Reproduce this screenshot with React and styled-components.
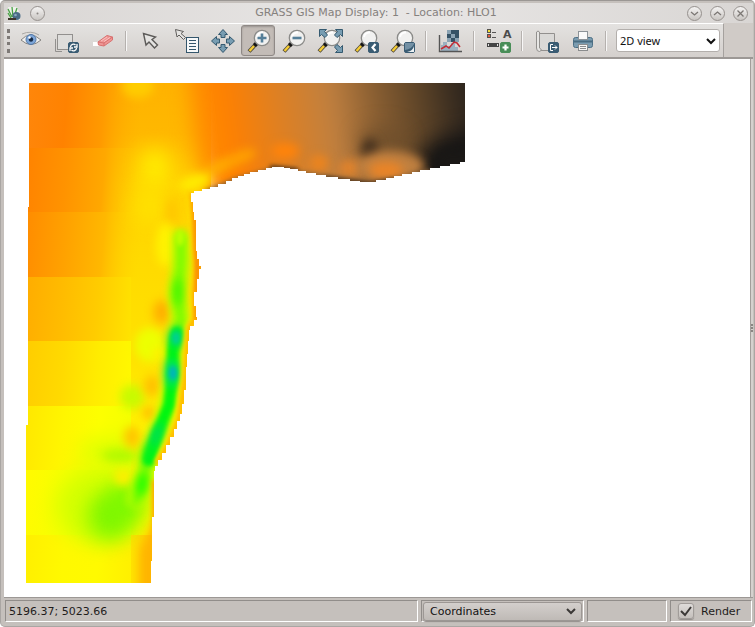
import React, { useState } from "react";
import styled, { createGlobalStyle } from "styled-components";

const GlobalStyle = createGlobalStyle`
  * {
    box-sizing: border-box;
  }
  body {
    margin: 0;
    background: #ffffff;
    font-family: "DejaVu Sans", sans-serif;
    font-size: 11px;
    color: #1f1c1b;
  }
  button,
  select,
  input {
    font: inherit;
    color: inherit;
    margin: 0;
    padding: 0;
  }
`;

const Window = styled.div`
  display: flex;
  flex-direction: column;
  min-height: 100vh;
  padding: 2px 1px 1px 3px;
  background: #c5c0bc;
  border: 1px solid #aaa6a3;
  border-top-color: #9b9794;
  border-radius: 5px;
`;

const TitleBar = styled.header`
  display: flex;
  align-items: center;
  height: 20px;
  padding: 0 5px 0 3px;
  gap: 8px;
  background: linear-gradient(90deg, #d9d6d4, #e9e7e6 50%, #d9d6d4);
`;

const Title = styled.h1`
  flex: 1;
  margin: 0;
  padding-left: 20px;
  text-align: center;
  white-space: pre;
  font-size: 11px;
  line-height: 20px;
  font-weight: normal;
  color: #85817e;
`;

const WindowButton = styled.button`
  display: flex;
  align-items: center;
  justify-content: center;
  width: 15px;
  height: 15px;
  border: 1px solid #96918e;
  border-radius: 50%;
  background: linear-gradient(#f4f3f2, #c9c5c2);
`;

const ToolRow = styled.div`
  display: flex;
  height: 36px;
  background: #d0cbc7;
  border-bottom: 2px solid #9c9895;
`;

const ToolBar = styled.div`
  display: flex;
  align-items: center;
  width: 720px;
  padding-right: 3px;
  background: linear-gradient(#e4e2e0, #d4d0cd);
  border-top: 1px solid #ffffff;
  border-right: 1px solid #a5a19e;
`;

const Grip = styled.div`
  width: 8px;
  height: 24px;
  border-left: 3px dotted #7e7a77;
  margin-left: 3px;
  margin-right: -3px;
`;

const ToolButton = styled.button`
  display: flex;
  align-items: center;
  justify-content: center;
  flex: none;
  width: 34px;
  height: 31px;
  margin: 0 1px;
  border: 1px solid ${(props) => (props.$active ? "#8f8986" : "transparent")};
  border-radius: 3px;
  background: ${(props) => (props.$active ? "#c3bcb7" : "transparent")};
  box-shadow: ${(props) => (props.$active ? "inset 0 1px 2px #9a9490" : "none")};

  svg {
    flex: none;
    overflow: visible;
  }
`;

const Separator = styled.div`
  flex: none;
  width: 2px;
  height: 20px;
  margin: 0 5px;
  background: linear-gradient(90deg, #b5b1ae 50%, #f8f7f7 50%);
`;

const SelectBox = styled.div`
  position: relative;
  width: ${(props) => props.$width};
  margin-left: ${(props) => (props.$flat ? "0" : "auto")};

  select {
    appearance: none;
    display: block;
    width: 100%;
    height: ${(props) => (props.$flat ? "19px" : "23px")};
    padding: 0 20px 0 ${(props) => (props.$flat ? "6px" : "3px")};
    border: 1px solid ${(props) => (props.$flat ? "#9c9794" : "#b3afac")};
    border-radius: 3px;
    background: ${(props) =>
      props.$flat ? "linear-gradient(#d3cfcc, #bfbab6)" : "#ffffff"};
    box-shadow: ${(props) => (props.$flat ? "0 1px 1px #8e8986" : "none")};
    font-family: ${(props) => (props.$flat ? "inherit" : '"Noto Sans", sans-serif')};
    font-size: 11px;
    color: #111111;
  }
  svg {
    position: absolute;
    right: ${(props) => (props.$flat ? "6px" : "4px")};
    top: 50%;
    margin-top: -4px;
    pointer-events: none;
  }
`;

const MapRow = styled.main`
  display: flex;
  flex: 1;
`;

const MapCanvas = styled.div`
  flex: 1;
  padding: 24px 22px 14px;
  background: #ffffff;

  svg {
    display: block;
  }
`;

const Sash = styled.div`
  display: flex;
  align-items: center;
  width: 3px;
  border-left: 1px solid #a29e9b;
  background: #d5d1ce;

  &::after {
    content: "";
    height: 8px;
    border-left: 2px dotted #8a8683;
  }
`;

const StatusBar = styled.footer`
  display: grid;
  grid-template-columns: 1fr 163px 80px 82px;
  gap: 3px;
  height: 28px;
  padding: 2px 1px 3px 1px;
  border-top: 1px solid #9c9895;
`;

const Field = styled.div`
  display: flex;
  align-items: center;
  padding: 0 ${(props) => (props.$tight ? "1px" : "3px")};
  border: 1px solid;
  border-color: #918d8a #ffffff #ffffff #918d8a;
`;

const RenderLabel = styled.label`
  display: flex;
  align-items: center;
  gap: 7px;
  padding-left: 4px;
`;

const TickBox = styled.span`
  display: grid;
  width: 16px;
  height: 16px;

  input,
  svg {
    grid-area: 1 / 1;
  }
  input {
    appearance: none;
    width: 16px;
    height: 16px;
    border: 1px solid #a19c99;
    border-radius: 3px;
    background: linear-gradient(#dedbd9, #c5c0bc);
    box-shadow: 0 1px 1px #918c89;
  }
  svg {
    pointer-events: none;
    visibility: hidden;
  }
  input:checked + svg {
    visibility: visible;
  }
`;

const Icon = ({ children }) => (
  <svg width="24" height="24" viewBox="0 0 24 24" fill="none">
    {children}
  </svg>
);

const Chevron = ({ color }) => (
  <svg width="10" height="8" viewBox="0 0 10 8" fill="none">
    <path d="M1 2L5 6L9 2" stroke={color} strokeWidth="2" />
  </svg>
);

const Badge = ({ color = "#3a5c73", children }) => (
  <g>
    <rect x="14.5" y="13.5" width="10" height="10" rx="1.5" fill={color} stroke={color} />
    {children}
  </g>
);

const Lens = ({ cx = 15 }) => (
  <g transform={`translate(${cx - 15} 0)`}>
    <path d="M9 15L2 22.5" stroke="#4c4638" strokeWidth="4" />
    <path d="M7 17L2.5 22" stroke="#f5cc35" strokeWidth="2.4" />
    <path d="M10 14L7.5 16.5" stroke="#151515" strokeWidth="4" />
    <circle cx="15" cy="9" r="7.7" fill="#f1f1f0" stroke="#8b8b89" strokeWidth="1.3" />
    <path d="M10 8a5.5 5.5 0 0 1 6-4.5" stroke="#ffffff" strokeWidth="2" />
  </g>
);

const EyeIcon = () => (
  <Icon>
    <path d="M3 11Q12 1 23 11Q13 20 3 11Z" fill="#f1f0ee" stroke="#858482" />
    <path d="M4 5Q13 1 21 6" stroke="#aaa8a5" />
    <circle cx="13" cy="10.5" r="5" fill="#7ea6d8" stroke="#5379a8" />
    <circle cx="13" cy="10.5" r="2.2" fill="#172b46" />
    <circle cx="11.5" cy="8.5" r="1.2" fill="#ffffff" />
  </Icon>
);

const RenderMapIcon = () => (
  <Icon>
    <path d="M1.5 10V22.5H8" stroke="#92908e" />
    <rect x="3.5" y="5.5" width="15" height="15" fill="#dedddb" stroke="#92908e" />
    <Badge>
      <path
        d="M16.5 18a3 3 0 0 1 5-2M23 15v3h-3M22.5 19a3 3 0 0 1-5 2M16 22v-3h3"
        stroke="#ffffff"
        strokeWidth="1.3"
      />
    </Badge>
  </Icon>
);

const EraserIcon = () => (
  <Icon>
    <rect x="3" y="13" width="8" height="4" fill="#ffffff" />
    <path d="M8 13L17 6.5L22.5 8V11L14 17L8.5 16Z" fill="#ef9694" stroke="#d87170" />
    <path d="M8 13L14 14L22.5 8M14 14V17" stroke="#d87170" />
    <path d="M11 12L17 8M14 12.5L20 8.5" stroke="#f9c2c0" />
  </Icon>
);

const PointerIcon = () => (
  <Icon>
    <path
      d="M5.5 4.5L8 16L11 13L16.5 19L19.5 16L14 10.5L17.5 8Z"
      fill="#e5e4e2"
      stroke="#5c5a58"
      strokeWidth="1.4"
    />
  </Icon>
);

const QueryIcon = () => (
  <Icon>
    <path d="M1.5 0.5L3 8L5 6L9.5 10.5L11.5 8.5L7 4.5L9.5 2.5Z" fill="#e5e4e2" stroke="#605e5c" />
    <rect x="12.5" y="8.5" width="12" height="15" fill="#f6f8f9" stroke="#34566c" />
    <path d="M15 11.5H22M15 14.5H22M15 17.5H22M15 20.5H22" stroke="#34566c" />
  </Icon>
);

const PanIcon = () => (
  <Icon>
    {[0, 90, 180, 270].map((angle) => (
      <path
        key={angle}
        transform={`rotate(${angle} 13 12)`}
        d="M13 0.5L17.5 5.5H15V8.5H11V5.5H8.5Z"
        fill="#789db2"
        stroke="#355a70"
      />
    ))}
  </Icon>
);

const ZoomInIcon = () => (
  <Icon>
    <Lens cx={16} />
    <path d="M11.5 9H20.5M16 4.5V13.5" stroke="#557f99" strokeWidth="2.6" />
  </Icon>
);

const ZoomOutIcon = () => (
  <Icon>
    <Lens />
    <path d="M10.5 9H19.5" stroke="#557f99" strokeWidth="2.6" />
  </Icon>
);

const ZoomExtentIcon = () => (
  <Icon>
    <Lens cx={14} />
    {["", "translate(26 0) scale(-1 1)", "translate(26 24) scale(-1 -1)"].map((t) => (
      <path
        key={t}
        transform={t}
        d="M1.5 0.5H8.5L6.5 2.5L9.5 6L7 8.5L3.5 5.5L1.5 7.5Z"
        fill="#789db2"
        stroke="#355a70"
      />
    ))}
  </Icon>
);

const ZoomBackIcon = () => (
  <Icon>
    <Lens />
    <Badge>
      <path d="M21.5 15L18.5 18.5L21.5 22" stroke="#ffffff" strokeWidth="2.2" />
    </Badge>
  </Icon>
);

const ZoomMenuIcon = () => (
  <Icon>
    <Lens />
    <Badge>
      <path d="M15 14H24V15Q22 20 15 21Z" fill="#7391a5" />
      <path d="M24 17V23H17Q23 22 24 17Z" fill="#eef2f4" />
    </Badge>
  </Icon>
);

const AnalyzeIcon = () => (
  <Icon>
    <path d="M9 1H21V13H9Z" fill="#8ba3b3" />
    <path d="M13 1H17V5H13ZM9 5H13V9H9ZM17 5H21V9H17ZM13 9H17V13H13ZM17 1H21V5H17Z" fill="#355266" />
    <path d="M3 22V16H5V13H9V17H13V14H17V18H20V22Z" fill="#9bb1c0" />
    <path d="M1.5 6V22.5H24" stroke="#555555" strokeWidth="1.4" />
    <path d="M3 20L8 17L11 19L16 13L19 14L22 18" stroke="#c32d36" strokeWidth="1.5" />
  </Icon>
);

const OverlayIcon = () => (
  <Icon>
    <rect x="1.5" y="0.5" width="3" height="3" fill="#f3df34" stroke="#55534e" />
    <rect x="1.5" y="5.5" width="3" height="3" fill="#e35c43" stroke="#55534e" />
    <path d="M6 3.5H10M6 8.5H10" stroke="#555555" />
    <rect x="1.5" y="14.5" width="11" height="3" fill="#e3e3e3" stroke="#444444" />
    <path d="M3 16H11" stroke="#444444" strokeWidth="2" />
    <text x="17" y="9" fontSize="11" fontWeight="bold" fill="#4b4b4b">
      A
    </text>
    <Badge color="#498e58">
      <path d="M16.5 18.5H22.5M19.5 15.5V21.5" stroke="#ffffff" strokeWidth="2.2" />
    </Badge>
  </Icon>
);

const SaveIcon = () => (
  <Icon>
    <path d="M5.5 4.5H20.5V21.5H5.5Z" fill="#dad9d7" stroke="#92908e" />
    <path d="M2.5 19V3Q4 1 5.5 3V19Q9 21 5.5 22.5Q2.5 22.5 2.5 19Z" fill="#e7e6e4" stroke="#92908e" />
    <Badge>
      <path d="M19 15.5H16.5V21.5H19M18 18.5H23M21 16.5L23 18.5L21 20.5" stroke="#ffffff" />
    </Badge>
  </Icon>
);

const PrintIcon = () => (
  <Icon>
    <rect x="3.5" y="8.5" width="19" height="10" rx="2" fill="#7b9cb0" stroke="#4c6f85" />
    <rect x="8.5" y="2.5" width="9" height="8" fill="#fafafa" stroke="#8d9398" />
    <path d="M4 12.5H22" stroke="#486b80" strokeWidth="2" />
    <rect x="8.5" y="15.5" width="9" height="6" fill="#f5f5f4" stroke="#8a8c8d" />
    <path d="M10 17.5H16M10 19.5H16" stroke="#8a8c8d" />
  </Icon>
);

const GrassLogo = () => (
  <svg width="15" height="15" viewBox="0 0 15 15">
    <path d="M1 1H10L13 8V14H3Z" fill="#eef1ea" />
    <path d="M5 11L1 3M6 11L5 1M7 11L10 2M4 12L1 7" stroke="#47a145" strokeWidth="1.3" />
    <circle cx="9.5" cy="10" r="4" fill="#4a6c86" />
    <path d="M1 13H9" stroke="#3e352c" strokeWidth="2" />
    <circle cx="8.5" cy="9" r="1.3" fill="#8baabd" />
  </svg>
);

const toolGroups = [
  [
    { name: "Display map", icon: EyeIcon },
    { name: "Re-render map", icon: RenderMapIcon },
    { name: "Erase display", icon: EraserIcon },
  ],
  [
    { name: "Pointer", icon: PointerIcon },
    { name: "Query", icon: QueryIcon },
    { name: "Pan", icon: PanIcon },
    { name: "Zoom in", icon: ZoomInIcon },
    { name: "Zoom out", icon: ZoomOutIcon },
    { name: "Zoom to map", icon: ZoomExtentIcon },
    { name: "Zoom back", icon: ZoomBackIcon },
    { name: "Zoom options", icon: ZoomMenuIcon },
  ],
  [{ name: "Analyze map", icon: AnalyzeIcon }],
  [{ name: "Add overlay", icon: OverlayIcon }],
  [
    { name: "Save display", icon: SaveIcon },
    { name: "Print display", icon: PrintIcon },
  ],
];

// elevation tiles on the western side, the northern ones fade into the land east of them
const strips = [
  { y: 83, h: 65, fade: true, colors: ["#ff860a", "#ff8200", "#ff9a00", "#ffae00"] },
  { y: 148, h: 64, fade: true, colors: ["#ff8400", "#ff9300", "#ffa800", "#ffc400"] },
  { y: 212, h: 65, fade: true, colors: ["#ff8e00", "#ffa200", "#ffb800", "#ffd400"] },
  { y: 277, h: 64, colors: ["#ffae00", "#ffbc00", "#ffcc00", "#ffe200"] },
  { y: 341, h: 65, colors: ["#ffce00", "#ffda00", "#ffec00", "#fff800"] },
  { y: 406, h: 64, colors: ["#ffe900", "#fff600", "#fdff00", "#f4ff00"] },
  { y: 470, h: 65, colors: ["#fffb00", "#f7ff00", "#f0ff00", "#f4ff00"] },
  { y: 535, h: 48, colors: ["#fff000", "#fff900", "#fffa00", "#fff000"] },
];

const outline =
  "M29 83H465V162H460V164H450V166H440V168H430V170H420V172H412V174H402V176H394V178H386V180H376V182H360V181H350V179H338V177H326V175H316V173H306V171H298V169H290V168H284V167H272V168H266V170H258V172H250V174H244V176H238V178H232V181H226V184H218V187H210V189H202V191H194V193H191V202H193V212H194V220H196V251H197V259H199V266H201V269H199V279H197V292H194V306H196V317H197V320H194V326H190V330H189V341H188V354H187V367H186V390H184V404H182V414H180V421H177V429H174V437H170V445H166V453H162V460H158V466H155V471H154V517H152V561H151V583H26V425H28V207H29Z";

const eastEdge =
  "M191 193L194 215L196 250L199 266L195 292L196 318L190 328L188 350L186 380L180 418L170 443L158 464";

const channel = "M181 232L181 264L177 294L181 320L174 344L173 372L169 405L158 434L147 462L142 486L134 506";

// soft spots drawn over the strips: [cx, cy, rx, ry, color, blur, angle]
const warmSpots = [
  [138, 86, 16, 12, "#ffcc00", "m"],
  [155, 168, 14, 20, "#ffee00", "l"],
  [150, 205, 14, 20, "#ffe200", "l"],
  [172, 212, 6, 14, "#ffc600", "m"],
  [166, 245, 10, 22, "#fff200", "m"],
  [132, 397, 12, 12, "#c8fa00", "m"],
  [150, 345, 15, 17, "#edff00", "m"],
  [110, 452, 30, 12, "#d8ff00", "l"],
  [120, 456, 18, 7, "#b0fa00", "m"],
  [100, 506, 44, 38, "#d4ff00", "l"],
  [110, 516, 22, 24, "#80f700", "l"],
  [126, 502, 18, 20, "#7af800", "l"],
  [162, 312, 9, 12, "#ffb000", "m"],
  [159, 354, 7, 6, "#fff000", "m"],
  [152, 386, 8, 11, "#ffc000", "m"],
  [149, 413, 7, 7, "#ffc000", "m"],
  [132, 437, 8, 11, "#ffc400", "m"],
  [123, 477, 9, 8, "#ffee00", "m"],
];

const coreSpots = [
  [180, 238, 4, 8, "#bcff00", "s"],
  [178, 292, 4, 14, "#38f400", "m"],
  [176, 338, 7, 11, "#00e060", "m"],
  [176, 338, 4, 6, "#00cf92", "s"],
  [172, 373, 7, 14, "#00dd74", "m"],
  [173, 373, 4, 7, "#00b5b8", "s"],
  [156, 436, 5, 14, "#00dc5c", "m", 22],
  [148, 454, 5, 12, "#00f020", "m", 12],
  [142, 484, 5, 12, "#18ff00", "m", 10],
];

const southSpots = [
  [239, 158, 18, 6, "#ffa200", "m", -22],
  [216, 168, 16, 6, "#ffad00", "m", -24],
  [195, 182, 17, 7, "#ffed00", "m", -18],
  [285, 151, 14, 8, "#ff830a", "m"],
  [319, 163, 9, 8, "#ed841d", "m"],
  [350, 168, 11, 8, "#e2832b", "m"],
  [390, 166, 34, 15, "#c08040", "m"],
  [386, 170, 17, 8, "#ea8426", "m"],
];

const Spots = ({ items }) =>
  items.map(([cx, cy, rx, ry, color, blur, angle = 0], index) => (
    <ellipse
      key={index}
      cx={cx}
      cy={cy}
      rx={rx}
      ry={ry}
      fill={color}
      filter={`url(#blur-${blur})`}
      transform={`rotate(${angle} ${cx} ${cy})`}
    />
  ));

const ElevationMap = () => (
  <svg width="440" height="500" viewBox="26 83 440 500" fill="none" role="img" aria-label="Elevation">
    <defs>
      {[
        ["s", 2],
        ["m", 5],
        ["l", 10],
      ].map(([name, size]) => (
        <filter
          key={name}
          id={`blur-${name}`}
          filterUnits="userSpaceOnUse"
          colorInterpolationFilters="sRGB"
          x="-40"
          y="0"
          width="640"
          height="680"
        >
          <feGaussianBlur stdDeviation={size} />
        </filter>
      ))}
      <clipPath id="land">
        <path d={outline} />
      </clipPath>
      {strips.map((strip) => (
        <linearGradient
          key={strip.y}
          id={`strip-${strip.y}`}
          gradientUnits="userSpaceOnUse"
          x1="28"
          y1={strip.y + 30}
          x2={strip.fade ? 140 : 131}
          y2={strip.y + 40}
        >
          {strip.colors.map((color, index) => (
            <stop
              key={index}
              offset={index / 3}
              stopColor={color}
              stopOpacity={strip.fade && index === 3 ? 0 : 1}
            />
          ))}
        </linearGradient>
      ))}
      <linearGradient id="east" gradientUnits="userSpaceOnUse" x1="0" y1="83" x2="0" y2="583">
        <stop offset="0" stopColor="#ffb200" />
        <stop offset="0.1" stopColor="#ffb800" />
        <stop offset="0.2" stopColor="#ffd200" />
        <stop offset="0.35" stopColor="#ffda00" />
        <stop offset="0.55" stopColor="#ffe200" />
        <stop offset="0.7" stopColor="#fff400" />
        <stop offset="1" stopColor="#fff400" />
      </linearGradient>
      <linearGradient id="north" gradientUnits="userSpaceOnUse" x1="131" y1="140" x2="465" y2="90">
        <stop offset="0" stopColor="#ffb400" />
        <stop offset="0.1" stopColor="#ffb200" />
        <stop offset="0.18" stopColor="#ff9400" />
        <stop offset="0.29" stopColor="#ff8000" />
        <stop offset="0.43" stopColor="#e18020" />
        <stop offset="0.6" stopColor="#c08040" />
        <stop offset="0.73" stopColor="#8a5f32" />
        <stop offset="0.86" stopColor="#5f4528" />
        <stop offset="1" stopColor="#2c241d" />
      </linearGradient>
      <linearGradient id="corner" gradientUnits="userSpaceOnUse" x1="131" y1="0" x2="153" y2="0">
        <stop offset="0" stopColor="#ffd800" />
        <stop offset="1" stopColor="#ffae00" />
      </linearGradient>
    </defs>
    <g clipPath="url(#land)">
      <rect x="26" y="83" width="185" height="500" fill="url(#east)" />
      {strips.map((strip) => (
        <rect
          key={strip.y}
          x="26"
          y={strip.y}
          width={strip.fade ? 116 : 105}
          height={strip.h}
          fill={`url(#strip-${strip.y})`}
        />
      ))}
      <path d="M184 40H530V230H225L196 160Z" fill="url(#north)" filter="url(#blur-l)" />
      <Spots items={warmSpots} />
      <rect x="131" y="535" width="22" height="48" fill="url(#corner)" fillOpacity="0.6" />

      <path d="M520 120V230H420V150L445 135Z" fill="#161515" filter="url(#blur-l)" />
      <ellipse cx="382" cy="142" rx="24" ry="16" fill="#65492a" fillOpacity="0.6" filter="url(#blur-l)" />
      <ellipse cx="370" cy="150" rx="9" ry="12" fill="#493420" filter="url(#blur-m)" />
      <Spots items={southSpots} />
      <path d="M440 174L434 160L442 150L490 146V190Z" fill="#1a1816" filter="url(#blur-m)" />
      <path
        d="M206 193L235 181L275 170L320 177L350 182L372 185L400 180L430 172"
        stroke="#8a6238"
        strokeWidth="6"
        filter="url(#blur-s)"
      />
      <path d="M270 167L298 170M325 178L372 184L395 180" stroke="#382516" strokeWidth="3" filter="url(#blur-s)" />

      <path d={channel} stroke="#e4ff00" strokeWidth="16" filter="url(#blur-m)" />
      <path d={channel} stroke="#6cfa00" strokeWidth="11" filter="url(#blur-m)" />
      <path
        d="M177 332L173 350L172 380L169 405L158 432L149 460"
        stroke="#00f610"
        strokeWidth="11"
        strokeLinecap="round"
        filter="url(#blur-s)"
      />
      <Spots items={coreSpots} />
      <path d={eastEdge} stroke="#ffe000" strokeWidth="9" filter="url(#blur-s)" />
      <path d="M196 200L198 262L198 295L198 320" stroke="#f57c08" strokeWidth="6" filter="url(#blur-s)" />
      <path d={eastEdge} stroke="#ff9d00" strokeWidth="3" filter="url(#blur-s)" />
      <path d="M156 480V583" stroke="#ffa800" strokeWidth="8" filter="url(#blur-s)" />
      <path d="M158 515L140 550V600H165Z" fill="#ffb400" filter="url(#blur-m)" />
    </g>
  </svg>
);

const App = () => {
  const [activeTool, setActiveTool] = useState("Zoom in");
  const [render, setRender] = useState(true);

  return (
    <>
      <GlobalStyle />
      <Window>
        <TitleBar>
          <GrassLogo />
          <WindowButton aria-label="Window menu">
            <svg width="3" height="3">
              <circle cx="1.5" cy="1.5" r="1" fill="#8a8683" />
            </svg>
          </WindowButton>
          <Title>{"GRASS GIS Map Display: 1  - Location: HLO1"}</Title>
          {[
            ["Minimize", "M1 3L4.5 6L8 3"],
            ["Maximize", "M1 6L4.5 3L8 6"],
            ["Close", "M1.5 1.5L7.5 7.5M7.5 1.5L1.5 7.5"],
          ].map(([label, d]) => (
            <WindowButton key={label} aria-label={label}>
              <svg width="9" height="9" fill="none">
                <path d={d} stroke="#7b7774" strokeWidth="1.3" />
              </svg>
            </WindowButton>
          ))}
        </TitleBar>
        <ToolRow>
          <ToolBar>
            <Grip />
            {toolGroups.map((group, index) => (
              <React.Fragment key={index}>
                {group.map(({ name, icon: ToolIcon }) => (
                  <ToolButton
                    key={name}
                    aria-label={name}
                    $active={activeTool === name}
                    onClick={() => setActiveTool(name)}
                  >
                    <ToolIcon />
                  </ToolButton>
                ))}
                <Separator />
              </React.Fragment>
            ))}
            <SelectBox $width="104px">
              <select aria-label="View mode">
                <option>2D view</option>
                <option>3D view</option>
              </select>
              <Chevron color="#111111" />
            </SelectBox>
          </ToolBar>
        </ToolRow>
        <MapRow>
          <MapCanvas>
            <ElevationMap />
          </MapCanvas>
          <Sash />
        </MapRow>
        <StatusBar>
          <Field>5196.37; 5023.66</Field>
          <Field $tight>
            <SelectBox $flat $width="100%">
              <select aria-label="Status bar mode">
                <option>Coordinates</option>
                <option>Extent</option>
              </select>
              <Chevron color="#3b3836" />
            </SelectBox>
          </Field>
          <Field />
          <Field>
            <RenderLabel>
              <TickBox>
                <input
                  type="checkbox"
                  checked={render}
                  onChange={(e) => setRender(e.target.checked)}
                />
                <svg width="16" height="16" fill="none">
                  <path d="M3 8L7 12L13 4" stroke="#3b3836" strokeWidth="2" />
                </svg>
              </TickBox>
              Render
            </RenderLabel>
          </Field>
        </StatusBar>
      </Window>
    </>
  );
};

export default App;
